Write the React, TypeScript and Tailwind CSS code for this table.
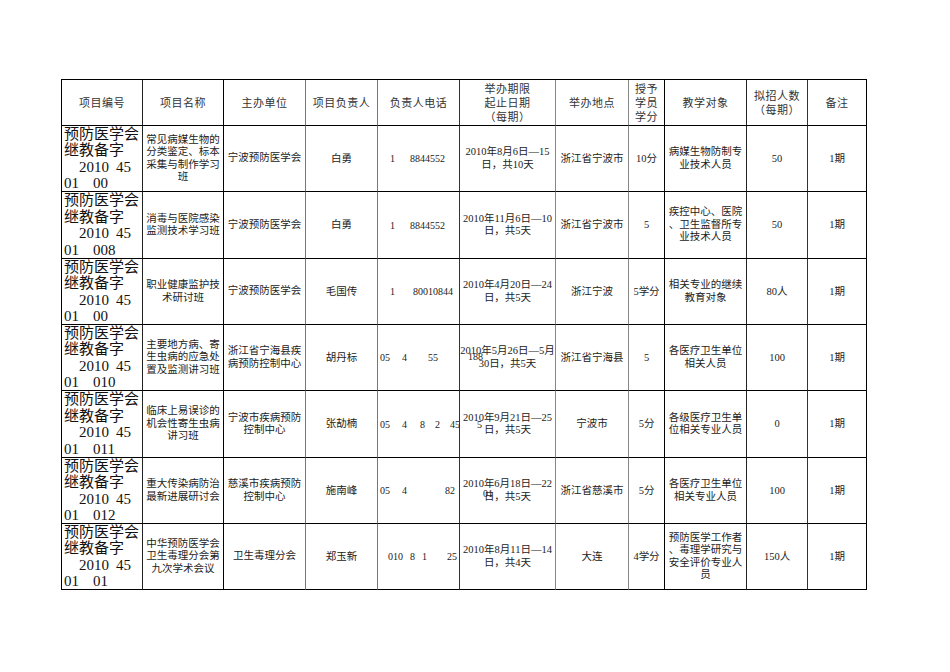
import type { ReactNode } from 'react'

const font = {
  fontFamily: '"Liberation Serif", "Noto Sans CJK SC", serif',
}

// vertical rule colour per column (the PDF export draws them unevenly)
const colBorder = [
  'border-r-[#222]',
  'border-r-black',
  'border-r-[#777]',
  'border-r-[#777]',
  'border-r-[#333]',
  'border-r-[#888]',
  'border-r-[#888]',
  'border-r-black',
  'border-r-[#222]',
  'border-r-[#333]',
  'border-r-black',
]

const Cell = ({
  col,
  className = '',
  children,
}: {
  col: number
  className?: string
  children?: ReactNode
}) => (
  <div
    className={`relative border-r border-b border-b-black ${colBorder[col]} ${className}`}
  >
    {children}
  </div>
)

const Lines = ({ lines }: { lines: string[] }) => (
  <div className="flex flex-col items-center text-center leading-[12.5px]">
    {lines.map((l, i) => (
      <div key={i} className="whitespace-nowrap">
        {l}
      </div>
    ))}
  </div>
)

type Row = {
  suffix: string
  name: string[]
  org: string[]
  person: string
  phone: ReactNode
  date: string[]
  place: string
  credit: string
  target: string[]
  count: string
}

const rows: Row[] = [
  {
    suffix: '00',
    name: ['常见病媒生物的', '分类鉴定、标本', '采集与制作学习', '班'],
    org: ['宁波预防医学会'],
    person: '白勇',
    phone: (
      <>
        <span className="ml-[12px]">1</span>
        <span className="ml-[15px]">8844552</span>
      </>
    ),
    date: ['2010年8月6日—15', '日，共10天'],
    place: '浙江省宁波市',
    credit: '10分',
    target: ['病媒生物防制专', '业技术人员'],
    count: '50',
  },
  {
    suffix: '008',
    name: ['消毒与医院感染', '监测技术学习班'],
    org: ['宁波预防医学会'],
    person: '白勇',
    phone: (
      <>
        <span className="ml-[12px]">1</span>
        <span className="ml-[15px]">8844552</span>
      </>
    ),
    date: ['2010年11月6日—10', '日，共5天'],
    place: '浙江省宁波市',
    credit: '5',
    target: ['疾控中心、医院', '、卫生监督所专', '业技术人员'],
    count: '50',
  },
  {
    suffix: '00',
    name: ['职业健康监护技', '术研讨班'],
    org: ['宁波预防医学会'],
    person: '毛国传',
    phone: (
      <>
        <span className="ml-[12px]">1</span>
        <span className="ml-[18px]">80010844</span>
      </>
    ),
    date: ['2010年4月20日—24', '日，共5天'],
    place: '浙江宁波',
    credit: '5学分',
    target: ['相关专业的继续', '教育对象'],
    count: '80人',
  },
  {
    suffix: '010',
    name: ['主要地方病、寄', '生虫病的应急处', '置及监测讲习班'],
    org: ['浙江省宁海县疾', '病预防控制中心'],
    person: '胡丹标',
    phone: (
      <>
        <span className="ml-[2px]">05</span>
        <span className="ml-[12px]">4</span>
        <span className="ml-[21px]">55</span>
        <span className="absolute left-[90px] top-[24px]">188</span>
      </>
    ),
    date: ['2010年5月26日—5月', '30日，共5天'],
    place: '浙江省宁海县',
    credit: '5',
    target: ['各医疗卫生单位', '相关人员'],
    count: '100',
  },
  {
    suffix: '011',
    name: ['临床上易误诊的', '机会性寄生虫病', '讲习班'],
    org: ['宁波市疾病预防', '控制中心'],
    person: '张劼楠',
    phone: (
      <>
        <span className="ml-[2px]">05</span>
        <span className="ml-[12px]">4</span>
        <span className="ml-[13px]">8</span>
        <span className="ml-[10px]">2</span>
        <span className="ml-[10px]">45</span>
        <span className="absolute left-[99px] top-[26px]">5</span>
      </>
    ),
    date: ['2010年9月21日—25', '日，共5天'],
    place: '宁波市',
    credit: '5分',
    target: ['各级医疗卫生单', '位相关专业人员'],
    count: '0',
  },
  {
    suffix: '012',
    name: ['重大传染病防治', '最新进展研讨会'],
    org: ['慈溪市疾病预防', '控制中心'],
    person: '施南峰',
    phone: (
      <>
        <span className="ml-[2px]">05</span>
        <span className="ml-[12px]">4</span>
        <span className="ml-[38px]">82</span>
        <span className="absolute left-[105px] top-[28px]">01</span>
      </>
    ),
    date: ['2010年6月18日—22', '日，共5天'],
    place: '浙江省慈溪市',
    credit: '5分',
    target: ['各医疗卫生单位', '相关专业人员'],
    count: '100',
  },
  {
    suffix: '01',
    name: ['中华预防医学会', '卫生毒理分会第', '九次学术会议'],
    org: ['卫生毒理分会'],
    person: '郑玉新',
    phone: (
      <>
        <span className="ml-[10px]">010</span>
        <span className="ml-[7px]">8</span>
        <span className="ml-[7px]">1</span>
        <span className="ml-[20px]">25</span>
      </>
    ),
    date: ['2010年8月11日—14', '日，共4天'],
    place: '大连',
    credit: '4学分',
    target: ['预防医学工作者', '、毒理学研究与', '安全评价专业人', '员'],
    count: '150人',
  },
]

const headers: string[][] = [
  ['项目编号'],
  ['项目名称'],
  ['主办单位'],
  ['项目负责人'],
  ['负责人电话'],
  ['举办期限', '起止日期', '（每期）'],
  ['举办地点'],
  ['授予', '学员', '学分'],
  ['教学对象'],
  ['拟招人数', '（每期）'],
  ['备注'],
]

const center = 'flex items-center justify-center'

export default function App() {
  return (
    <div className="min-h-[672px] w-[950px] bg-white pt-[79px] pl-[61px]" style={font}>
      <div className="grid w-[806px] grid-cols-[81px_81px_82px_72px_82px_96px_73px_36px_82px_61px_59px] grid-rows-[46px_66px_67px_66px_66px_67px_66px_66px] border-t border-l border-black text-[#222]">
        {headers.map((h, i) => (
          <Cell key={i} col={i} className={`${center} text-[11px] leading-[14px] text-[#333]`}>
            <div className="flex flex-col items-center text-center">
              {h.map((l, j) => (
                <div key={j} className="whitespace-nowrap tracking-[0.5px]">
                  {l}
                </div>
              ))}
            </div>
          </Cell>
        ))}

        {rows.map((r, ri) => (
          <div key={ri} className="contents">
            <Cell col={0} className="flex flex-col justify-center pl-[2px] text-[15px] leading-[16.5px] text-[#111]">
              <div className="whitespace-nowrap">预防医学会</div>
              <div className="whitespace-nowrap">继教备字</div>
              <div className="whitespace-nowrap pl-[15px]">
                2010<span className="ml-[7px]">45</span>
              </div>
              <div className="whitespace-nowrap">
                01<span className="ml-[14px]">{r.suffix}</span>
              </div>
            </Cell>
            <Cell col={1} className={`${center} text-[10.5px]`}>
              <Lines lines={r.name} />
            </Cell>
            <Cell col={2} className={`${center} text-[10.5px]`}>
              <Lines lines={r.org} />
            </Cell>
            <Cell col={3} className={`${center} text-[10.5px]`}>
              {r.person}
            </Cell>
            <Cell col={4} className="flex items-center whitespace-nowrap text-[10px]">
              {r.phone}
            </Cell>
            <Cell col={5} className={`${center} text-[10.5px]`}>
              <Lines lines={r.date} />
            </Cell>
            <Cell col={6} className={`${center} text-[10.5px]`}>
              {r.place}
            </Cell>
            <Cell col={7} className={`${center} text-[10.5px]`}>
              <span className="whitespace-nowrap">{r.credit}</span>
            </Cell>
            <Cell col={8} className={`${center} text-[10.5px]`}>
              <Lines lines={r.target} />
            </Cell>
            <Cell col={9} className={`${center} text-[10.5px]`}>
              {r.count}
            </Cell>
            <Cell col={10} className={`${center} text-[10.5px]`}>
              1期
            </Cell>
          </div>
        ))}
      </div>
    </div>
  )
}
